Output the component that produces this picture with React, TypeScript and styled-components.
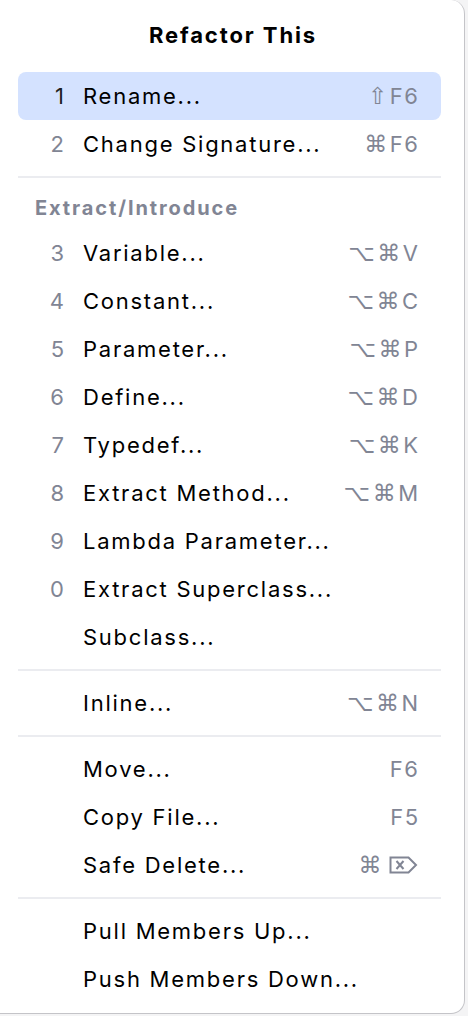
import * as React from "react";
import styled, {createGlobalStyle} from "styled-components";

const Global = createGlobalStyle`
html, body {
  margin: 0;
  padding: 0;
  background: #f4f4f5;
}
body {
  font-family: Inter, "Noto Sans", "DejaVu Sans", sans-serif;
  -webkit-font-smoothing: antialiased;
}
`

const Popup = styled.div`
width: 465px;
min-height: 1014px;
background: #ffffff;
border-right: 1px solid #c4c4c8;
border-bottom: 1px solid #c4c4c8;
border-radius: 0 14px 14px 0;
box-sizing: border-box;
display: flex;
flex-direction: column;
`

const Title = styled.div`
height: 72px;
display: flex;
align-items: center;
justify-content: center;
font-size: 22px;
font-weight: 700;
letter-spacing: 1.9px;
color: #000000;
padding-left: 2px;
padding-bottom: 2px;
box-sizing: border-box;
`

const Row = styled.div<{selected?: boolean}>`
margin: 0 23px 0 18px;
height: 48px;
border-radius: 8px;
background: ${p => p.selected ? "#d4e2ff" : "transparent"};
display: grid;
grid-template-columns: 46px 1fr auto;
column-gap: 19px;
align-items: center;
padding-right: 23px;
font-size: 22px;
color: #000000;
`

const Num = styled.span<{selected?: boolean}>`
text-align: right;
color: ${p => p.selected ? "#1e1f22" : "#818594"};
`

const Label = styled.span`
white-space: nowrap;
letter-spacing: 1.75px;
`

const Keys = styled.span`
display: flex;
align-items: center;
color: #818594;
font-size: 22px;
letter-spacing: 1.5px;
& > :last-child {
  letter-spacing: 0;
}
`

const Glyph = styled.span`
font-family: "DejaVu Sans", sans-serif;
font-size: 23px;
margin-right: 1px;
`

const Separator = styled.div`
margin: 8px 23px 8px 18px;
height: 2px;
background: #ebecf0;
`

const Header = styled.div`
height: 43px;
display: flex;
align-items: center;
padding-left: 35px;
font-size: 20px;
font-weight: 700;
letter-spacing: 1.9px;
color: #818594;
`

const DeleteIcon = () => (
    <svg width="29" height="18" viewBox="0 0 29 18" style={{marginLeft: 5}}>
        <path d="M1.5 1.5 H19.5 L27 9 L19.5 16.5 H1.5 Z" fill="none" stroke="#818594" strokeWidth="2" strokeLinejoin="miter"/>
        <path d="M7.5 5 L14.5 13 M14.5 5 L7.5 13" stroke="#818594" strokeWidth="2"/>
    </svg>
)

const shortcut = (s: string) => {
    // glyphs like ⌥ ⌘ ⇧ come from DejaVu, letters from Inter
    return s.split("").map((c, i) => /[A-Z0-9]/.test(c) ? <span key={i}>{c}</span> : <Glyph key={i}>{c}</Glyph>)
}

interface item {
    num?: string
    label: string
    keys?: string
    del?: boolean
    selected?: boolean
}

let Item: React.FC<item> = ({num, label, keys, del, selected}) => {
    return (
        <Row selected={selected}>
            <Num selected={selected}>{num}</Num>
            <Label>{label}</Label>
            <Keys>
                {keys && shortcut(keys)}
                {del && <DeleteIcon/>}
            </Keys>
        </Row>
    )
}

const extract: Array<item> = [
    {num: "3", label: "Variable...", keys: "⌥⌘V"},
    {num: "4", label: "Constant...", keys: "⌥⌘C"},
    {num: "5", label: "Parameter...", keys: "⌥⌘P"},
    {num: "6", label: "Define...", keys: "⌥⌘D"},
    {num: "7", label: "Typedef...", keys: "⌥⌘K"},
    {num: "8", label: "Extract Method...", keys: "⌥⌘M"},
    {num: "9", label: "Lambda Parameter..."},
    {num: "0", label: "Extract Superclass..."},
    {label: "Subclass..."},
]

let App: React.FC = () => {
    return (
        <>
            <Global/>
            <Popup>
                <Title>Refactor This</Title>
                <Item num="1" label="Rename..." keys="⇧F6" selected/>
                <Item num="2" label="Change Signature..." keys="⌘F6"/>
                <Separator/>
                <Header>Extract/Introduce</Header>
                {extract.map(it => <Item key={it.label} {...it}/>)}
                <Separator/>
                <Item label="Inline..." keys="⌥⌘N"/>
                <Separator/>
                <Item label="Move..." keys="F6"/>
                <Item label="Copy File..." keys="F5"/>
                <Item label="Safe Delete..." keys="⌘" del/>
                <Separator/>
                <Item label="Pull Members Up..."/>
                <Item label="Push Members Down..."/>
            </Popup>
        </>
    )
}

export default App
